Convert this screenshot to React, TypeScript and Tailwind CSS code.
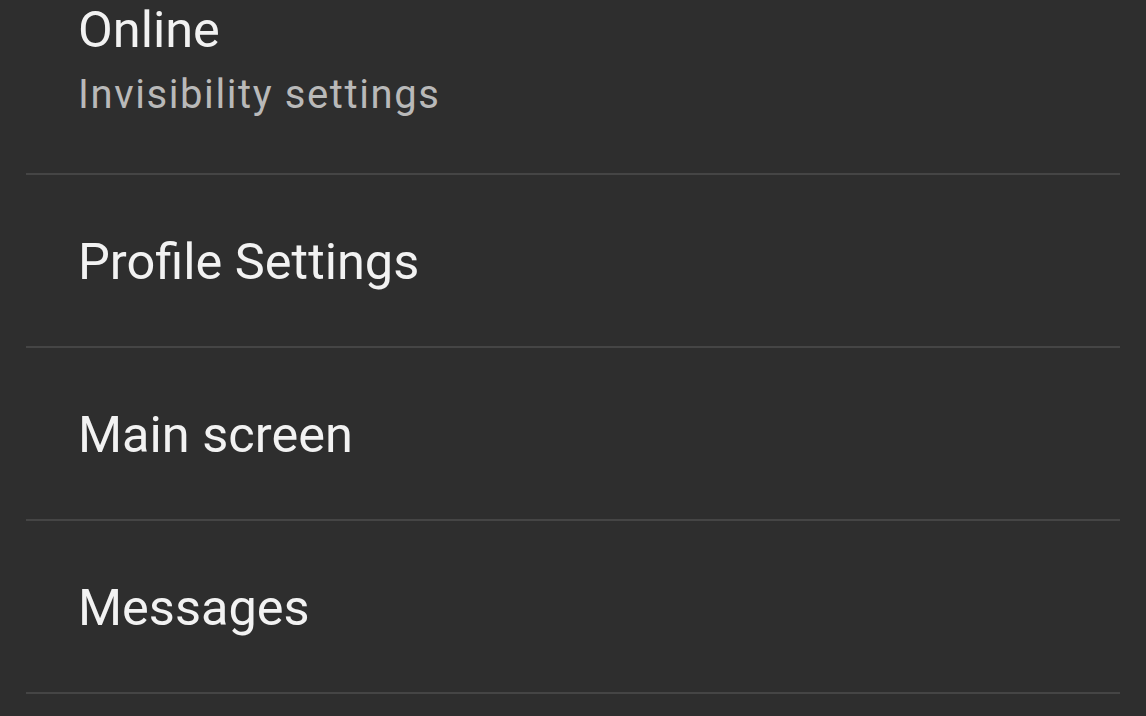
import React from 'react';

const rows = ['Profile Settings', 'Main screen', 'Messages'];

const App: React.FC = () => {
  return (
    <div className="h-[716px] w-full overflow-hidden bg-[#2e2e2e] font-['Roboto',sans-serif]">
      {/* Online row, scrolled partly out of view */}
      <div className="mx-[26px] box-border flex h-[175px] flex-col border-b-2 border-[#454545] pl-[52px]">
        <div className="text-[50.5px] leading-[60px] text-[#f2f2f2]">Online</div>
        <div className="mt-[12px] text-[40px] leading-[46px] tracking-[1.6px] text-[#b9b9b9]">Invisibility settings</div>
      </div>

      {rows.map((label) => (
        <div
          key={label}
          className="mx-[26px] box-border flex h-[173px] items-center border-b-2 border-[#454545] pl-[52px] pt-[3px]"
        >
          <span className="text-[50.5px] text-[#f2f2f2]">{label}</span>
        </div>
      ))}
    </div>
  );
};

export default App;
